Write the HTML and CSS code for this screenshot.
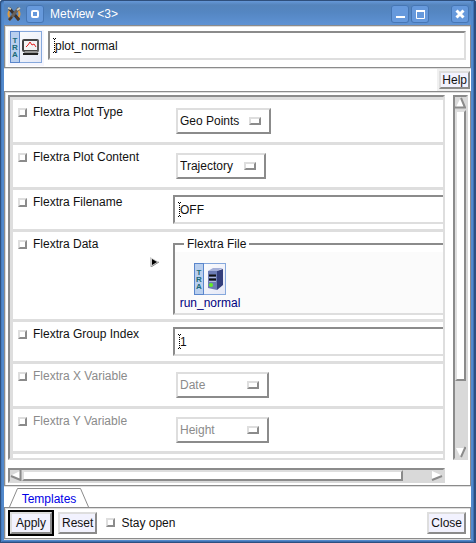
FILE: index.html
```html
<!DOCTYPE html>
<html lang="en">
<head>
<meta charset="utf-8">
<title>Metview</title>
<link rel="stylesheet" href="styles.css">
</head>
<body>
<div class="window">
  <header class="titlebar">
    <svg class="app-icon" width="14" height="14" viewBox="0 0 14 14" aria-hidden="true">
      <path d="M3 3Q0 7 3 11M11 3Q14 7 11 11" fill="none" stroke="#e09a3c" stroke-width="2"/>
      <path d="M2 1L12 13" stroke="#3a3230" stroke-width="3"/>
      <path d="M12 1L2 13" stroke="#6a6058" stroke-width="3"/>
      <path d="M1 1L4 2M10 3L13 1" stroke="#c8c8bc" stroke-width="2"/>
      <path d="M2 13L5 10M9 10L12 13" stroke="#4d3828" stroke-width="2"/>
    </svg>
    <button class="tb-button" type="button" aria-label="Pin">
      <svg width="18" height="18" viewBox="0 0 18 18"><rect x="6" y="6" width="6" height="6" rx="1" fill="none" stroke="#fff" stroke-width="2"/></svg>
    </button>
    <h1 class="title">Metview &lt;3&gt;</h1>
    <button class="tb-button" type="button" aria-label="Minimize">
      <svg width="18" height="18" viewBox="0 0 18 18"><path d="M5 12H14" stroke="#fff" stroke-width="2"/></svg>
    </button>
    <button class="tb-button" type="button" aria-label="Maximize">
      <svg width="18" height="18" viewBox="0 0 18 18"><path d="M5.500 5V13.500H13.500V5" fill="none" stroke="#fff"/><path d="M5 6H14" stroke="#fff" stroke-width="2"/></svg>
    </button>
    <button class="tb-button tb-close" type="button" aria-label="Close window">
      <svg width="18" height="18" viewBox="0 0 18 18"><path d="M5.500 5.500L12.500 12.500M12.500 5.500L5.500 12.500" stroke="#fff" stroke-width="3"/></svg>
    </button>
  </header>

  <main class="client">
    <section class="panel name-panel">
      <span class="icon-tile">
        <svg width="32" height="32" viewBox="0 0 32 32" aria-hidden="true">
          <defs><linearGradient id="fade" x1="0" y1="0" x2="1" y2="1"><stop offset="0" stop-color="#fff"/><stop offset="1" stop-color="#e4e8f6"/></linearGradient></defs>
          <rect x="0.500" y="0.500" width="31" height="31" fill="url(#fade)" stroke="#86a8dc"/>
          <rect x="0.500" y="0.500" width="9" height="31" fill="#b9cfee" stroke="#5a86cc"/>
          <text class="tra"><tspan x="5" y="12">T</tspan><tspan x="5" y="19">R</tspan><tspan x="5" y="26">A</tspan></text>
          <rect x="13" y="9" width="15" height="11" rx="1" fill="#f4f4f4" stroke="#444" stroke-width="2"/>
          <path d="M16 16L18 14L20 11L22 14L24 13L26 16" fill="none" stroke="#e42222" stroke-width="1"/>
          <path d="M15 20H27L29 23H13Z" fill="#999"/><path d="M13 23H28" stroke="#222" stroke-width="2"/><path d="M28 9V21" stroke="#777"/>
        </svg>
      </span>
      <span class="entry name-entry">
        <svg class="caret" width="3" height="15" viewBox="0 0 3 15"><path d="M0 .5H1M2 .5H3M1 1.500H2M1 3.500H2M1 5.500H2M1 7.500H2M1 9.500H2M1 11.500H2M1 13.500H2M0 14.500H1M2 14.500H3" stroke="#000"/></svg>
        <input type="text" value="plot_normal" aria-label="Name">
      </span>
    </section>

    <nav class="menu-row">
      <span class="help-wrap"><button class="push" type="button">Help</button></span>
    </nav>

    <section class="panel work">
      <form class="viewport">
        <div class="row">
          <label class="name"><input type="checkbox">Flextra Plot Type</label>
          <span class="option option-points"><select aria-label="Flextra Plot Type"><option>Geo Points</option></select></span>
        </div>
        <div class="row">
          <label class="name"><input type="checkbox">Flextra Plot Content</label>
          <span class="option option-content"><select aria-label="Flextra Plot Content"><option>Trajectory</option></select></span>
        </div>
        <div class="row">
          <label class="name"><input type="checkbox">Flextra Filename</label>
          <span class="entry">
            <svg class="caret" width="3" height="15" viewBox="0 0 3 15"><path d="M0 .5H1M2 .5H3M1 1.500H2M1 3.500H2M1 5.500H2M1 7.500H2M1 9.500H2M1 11.500H2M1 13.500H2M0 14.500H1M2 14.500H3" stroke="#000"/></svg>
            <input type="text" value="OFF" aria-label="Flextra Filename">
          </span>
        </div>
        <div class="row">
          <label class="name"><input type="checkbox">Flextra Data</label>
          <button class="expand" type="button" aria-label="Expand">
            <svg width="9" height="10" viewBox="0 0 9 10"><path d="M0 0L9 5L0 10Z" fill="#ccc"/><path d="M2 2L7 5L2 8Z" fill="#000"/><path d="M1 10L9 5" stroke="#888"/></svg>
          </button>
          <fieldset class="frame">
            <legend>Flextra File</legend>
            <div class="drop">
              <figure>
                <svg width="32" height="32" viewBox="0 0 32 32" aria-hidden="true">
                  <rect x="0.500" y="0.500" width="31" height="31" fill="url(#fade)" stroke="#86a8dc"/>
                  <rect x="0.500" y="0.500" width="9" height="31" fill="#b9cfee" stroke="#5a86cc"/>
                  <text class="tra"><tspan x="5" y="12">T</tspan><tspan x="5" y="19">R</tspan><tspan x="5" y="26">A</tspan></text>
                  <path d="M14 8L19 5H29L23 8Z" fill="#a5b0d8"/>
                  <path d="M14 8H23V27L14 25Z" fill="#6c7cb4"/>
                  <path d="M23 8L29 6V22L23 27Z" fill="#343f7c"/>
                  <path d="M15 12.500H22M15 16.500H22" stroke="#111" stroke-width="2"/>
                  <path d="M15 14.500H22M15 18.500H22" stroke="#aab4da"/>
                  <circle cx="17" cy="22" r="2" fill="#62f020"/>
                </svg>
                <figcaption>run_normal</figcaption>
              </figure>
            </div>
          </fieldset>
        </div>
        <div class="row">
          <label class="name"><input type="checkbox">Flextra Group Index</label>
          <span class="entry">
            <svg class="caret" width="3" height="15" viewBox="0 0 3 15"><path d="M0 .5H1M2 .5H3M1 1.500H2M1 3.500H2M1 5.500H2M1 7.500H2M1 9.500H2M1 11.500H2M1 13.500H2M0 14.500H1M2 14.500H3" stroke="#000"/></svg>
            <input type="text" value="1" aria-label="Flextra Group Index">
          </span>
        </div>
        <div class="row disabled">
          <label class="name"><input type="checkbox" disabled>Flextra X Variable</label>
          <span class="option option-axis"><select disabled aria-label="Flextra X Variable"><option>Date</option></select></span>
        </div>
        <div class="row disabled">
          <label class="name"><input type="checkbox" disabled>Flextra Y Variable</label>
          <span class="option option-axis"><select disabled aria-label="Flextra Y Variable"><option>Height</option></select></span>
        </div>
        <div class="row row-end"></div>
      </form>

      <div class="scroll scroll-v">
        <svg width="11" height="12" viewBox="0 0 11 12"><path d="M5.500 1L10 10H1Z" fill="#fff"/><path d="M6 1L10 10.500H0" fill="none" stroke="#8b8b8b" stroke-width="2"/></svg>
        <span class="thumb"></span><span class="trough"></span>
        <svg width="11" height="12" viewBox="0 0 11 12"><path d="M1 2H10L5.500 11Z" fill="#fff"/><path d="M10.500 1L6 11" stroke="#8b8b8b" stroke-width="2"/></svg>
      </div>
      <div class="scroll scroll-h">
        <svg width="12" height="11" viewBox="0 0 12 11"><path d="M1 5.500L10 1V10Z" fill="#fff"/><path d="M1 6L10.500 10V0" fill="none" stroke="#8b8b8b" stroke-width="2"/></svg>
        <span class="thumb"></span><span class="trough"></span>
        <svg width="12" height="11" viewBox="0 0 12 11"><path d="M1 1V10L11 5.500Z" fill="#fff"/><path d="M1 10L11 6" stroke="#8b8b8b" stroke-width="2"/></svg>
      </div>
    </section>

    <nav class="tabs">
      <a class="tab" href="#templates">
        <svg class="tab-shape" width="80" height="20" viewBox="0 0 80 20" aria-hidden="true"><path d="M.5 20L8.500 1.500H71.500L79.500 20" fill="none" stroke="#8b8b8b"/></svg>
        Templates
      </a>
    </nav>

    <footer class="panel actions">
      <span class="default"><button class="push" type="button">Apply</button></span>
      <button class="push" type="button">Reset</button>
      <label class="stay"><input type="checkbox">Stay open</label>
      <button class="push push-close" type="button">Close</button>
    </footer>
  </main>
</div>
</body>
</html>
```

FILE: styles.css
```css
:root {
  --dark: #8b8b8b;
  --light: #dedede;
  --trough: #d9d9d9;
}

*, *::after { box-sizing: border-box; }

body {
  margin: 0;
  background: #fff;
  color: #111;
  font: 12px/16px "Liberation Sans", Arial, sans-serif;
}

button, input, select { font: inherit; color: inherit; margin: 0; }
svg { display: block; }

.window {
  display: flex;
  flex-direction: column;
  height: 100vh;
  min-height: 400px;
  padding: 0 5px 4px 4px;
  border-radius: 3px 3px 0 0;
  background: #5289cc;
  box-shadow: inset 1px 1px #2f4f7c, inset -2px -1px #2d4f80, inset 2px 2px #477dbf, inset -3px -2px #3f70b0;
}

.titlebar {
  display: flex;
  flex: none;
  align-items: center;
  height: 25px;
  padding: 3px 2px 0 3px;
  background: linear-gradient(#2f4f7c 1px, #6698d8 1px, #5584bc 5px, #5486c2 12px, #5e92d4 100%);
}

.tb-button {
  flex: none;
  width: 18px;
  height: 18px;
  margin-left: 2px;
  padding: 0;
  border: 0;
  border-radius: 3px;
  background: #6699dc;
  box-shadow: inset 0 0 0 1px #4676b4;
}

.app-icon + .tb-button { margin-left: 5px; }
.tb-close { margin-left: 22px; }

.title {
  flex: 1;
  margin: 0 0 0 6px;
  color: #fff;
  font: 12px/16px "Liberation Sans", Arial, sans-serif;
}

.client {
  display: flex;
  flex: 1;
  flex-direction: column;
  min-height: 0;
  background: #fff;
}

.panel {
  border: 1px solid var(--dark);
  box-shadow: inset 1px 1px var(--light), 0 1px var(--light);
}

.name-panel {
  display: flex;
  flex: none;
  height: 43px;
  padding: 4px 4px 0 3px;
}

.icon-tile {
  width: 36px;
  height: 36px;
  padding: 1px 2px;
  background: #f5f5fd;
}

.tra {
  fill: #1d6b78;
  font: bold 8px "Liberation Sans", Arial, sans-serif;
  text-anchor: middle;
}

.entry {
  position: relative;
  display: block;
  height: 29px;
  border: solid;
  border-width: 2px 0 2px 2px;
  border-color: var(--dark) var(--light) var(--light) var(--dark);
}

.entry input {
  width: 100%;
  height: 25px;
  padding: 0 5px;
  border: 0;
  outline: 0;
  background: #fff;
}

.caret { position: absolute; left: 3px; top: 5px; }

.name-entry {
  flex: 1;
  margin: 1px 0 0 4px;
  border-right-width: 2px;
}

.menu-row {
  display: flex;
  flex: none;
  justify-content: flex-end;
  height: 23px;
  padding-top: 1px;
  padding-right: 1px;
}

.help-wrap { padding: 2px 0 2px 2px; background: #f0f0f0; }

.push {
  height: 22px;
  padding: 0 2px;
  border: 2px solid;
  border-color: var(--light) var(--dark) var(--dark) var(--light);
  background: #f2f2fe;
  line-height: 16px;
}

.help-wrap .push { height: 18px; padding: 0 1px; line-height: 14px; }

.work {
  display: grid;
  flex: 1;
  grid-template-columns: 1fr 15px;
  grid-template-rows: minmax(0, 1fr) 15px;
  gap: 8px;
  min-height: 0;
  padding: 3px 2px 2px 3px;
}

.viewport {
  overflow: hidden;
  border: 2px solid;
  border-color: var(--dark) var(--light) var(--light) var(--dark);
}

.row {
  display: grid;
  grid-template-columns: 130px 30px minmax(0, 1fr);
  align-items: start;
  border: solid var(--light);
  border-width: 3px 0 0 3px;
  padding: 4px 0;
}

.row-end { height: 20px; }

.name { display: flex; align-items: center; gap: 6px; padding-left: 5px; white-space: nowrap; }

input[type="checkbox"] {
  flex: none;
  appearance: none;
  width: 9px;
  height: 9px;
  border: 2px solid;
  border-color: var(--light) var(--dark) var(--dark) var(--light);
  background: #fff;
}

.disabled { color: var(--dark); }

.row > .entry { grid-column: 3; margin: 1px 0; }

.option {
  position: relative;
  grid-column: 3;
  height: 26px;
  margin: 4px 0 4px 3px;
}

.option select {
  appearance: none;
  width: 100%;
  height: 26px;
  padding: 0 0 0 2px;
  border: 2px solid;
  border-color: var(--light) var(--dark) var(--dark) var(--light);
  border-radius: 0;
  background: #fff;
  opacity: 1;
}

.option::after {
  content: "";
  position: absolute;
  top: 9px;
  right: 10px;
  width: 12px;
  height: 8px;
  border: 2px solid;
  border-color: var(--light) var(--dark) var(--dark) var(--light);
  pointer-events: none;
}

.option-points { width: 95px; }
.option-content { width: 90px; }
.option-axis { width: 93px; }

.expand { margin: 21px 0 0 7px; padding: 0; border: 0; background: none; }

.frame {
  min-width: 0;
  margin: 0;
  padding: 0;
  border: solid;
  border-width: 2px 0 2px 2px;
  border-color: var(--dark) var(--light) var(--light) var(--dark);
}

.frame legend { margin-left: 9px; padding: 0 3px; }

.drop { height: 61px; padding: 11px 4px 0; background: #fbfbfb; }

.drop figure {
  display: flex;
  flex-direction: column;
  align-items: center;
  width: 62px;
  margin: 0;
  color: #000080;
}

.scroll {
  display: flex;
  align-items: center;
  border: 2px solid;
  border-color: var(--dark) var(--trough) var(--trough) var(--dark);
  background: var(--trough);
}

.scroll svg { flex: none; }
.scroll-v { flex-direction: column; }

.thumb {
  align-self: stretch;
  border: 2px solid;
  border-color: var(--light) var(--dark) var(--dark) var(--light);
  background: #fff;
}

.scroll-v .thumb { flex: 271; margin-top: 1px; }
.scroll-v .trough { flex: 66; }
.scroll-h .thumb { flex: 381; }
.scroll-h .trough { flex: 28; }

.tabs {
  flex: none;
  height: 21px;
  padding: 1px 0 0 5px;
}

.tab {
  position: relative;
  display: block;
  width: 80px;
  height: 20px;
  color: #0000e6;
  line-height: 24px;
  text-align: center;
  text-decoration: none;
}

.tab-shape { position: absolute; left: 0; top: 0; }

.actions {
  display: flex;
  flex: none;
  align-items: center;
  height: 32px;
  padding: 0 4px 1px 3px;
}

.default { margin-right: 4px; border: 2px solid #000; }
.default .push { display: block; padding: 0 4px; }
.stay { display: flex; align-items: center; gap: 6px; margin-left: 9px; }
.push-close { margin-left: auto; }
```
